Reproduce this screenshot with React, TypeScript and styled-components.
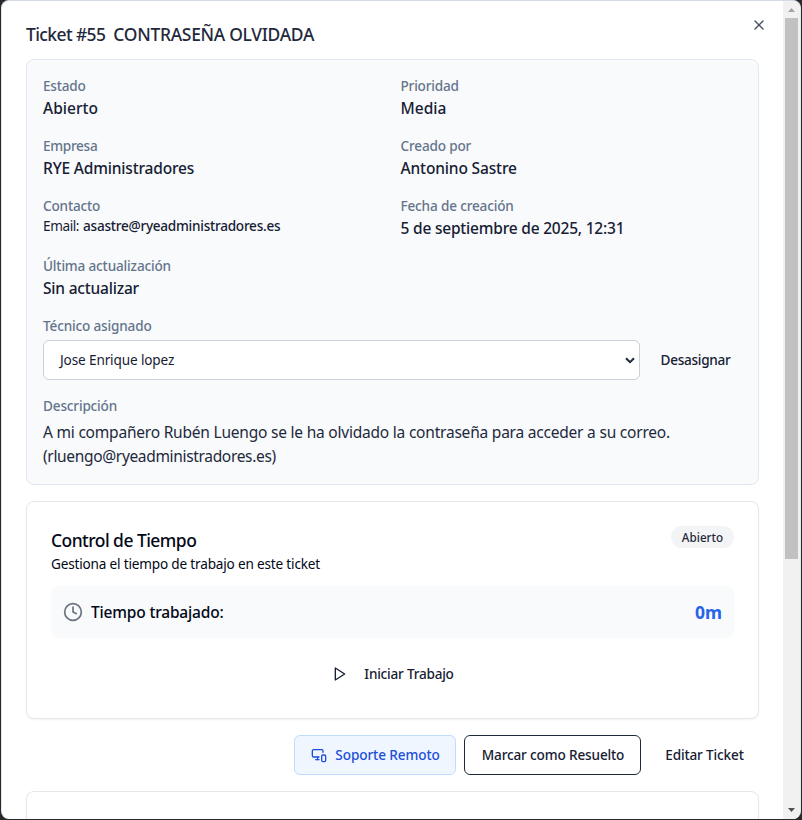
import React from "react";
import styled, { createGlobalStyle } from "styled-components";
import { Clock, MonitorSmartphone, X } from "lucide-react";

const GlobalStyle = createGlobalStyle`
  *, *::before, *::after { box-sizing: border-box; }
  body {
    margin: 0;
    overflow: hidden;
    background: #29292d;
    font-family: "Noto Sans", "Open Sans", sans-serif;
    color: #020817;
  }
  h2, h3, p, dl, dt, dd { margin: 0; font-weight: inherit; }
`;

interface Tracked {
  $track?: number;
}

const Dialog = styled.div`
  position: relative;
  display: flex;
  height: 819px;
  margin: 0 1px 1px;
  border: 1px solid #e2e8f0;
  border-top-color: #d5dbe6;
  border-bottom: 0;
  border-radius: 8px;
  background: #fff;
  overflow: hidden;
`;

const Content = styled.div`
  display: flex;
  flex: 1;
  flex-direction: column;
  gap: 16px;
  min-width: 0;
  padding: 24px 24px 0;
`;

const Title = styled.h2`
  display: flex;
  gap: 8px;
  height: 18px;
  font-size: 17.46px;
  font-weight: 500;
  line-height: 18px;
  color: #1e293b;
  white-space: nowrap;
`;

const TitlePart = styled.span<Tracked>`
  letter-spacing: ${(p) => p.$track ?? 0}px;
`;

const CloseButton = styled.button`
  position: absolute;
  top: 16px;
  right: 33px;
  display: flex;
  padding: 0;
  border: 0;
  background: none;
  color: #4c5564;
`;

const Details = styled.dl`
  display: grid;
  grid-template-columns: 1fr 1fr;
  gap: 16px;
  height: 426px;
  flex-shrink: 0;
  padding: 16px;
  border: 1px solid #e2e8f0;
  border-radius: 8px;
  background: #f8fafc;
`;

const Field = styled.div<{ $wide?: boolean }>`
  grid-column: ${(p) => (p.$wide ? "1 / -1" : "auto")};
  white-space: nowrap;
`;

const Label = styled.dt<Tracked>`
  font-size: 13.58px;
  font-weight: 500;
  line-height: 20px;
  letter-spacing: ${(p) => p.$track ?? -0.17}px;
  color: #64748b;
`;

const Value = styled.dd<Tracked>`
  font-size: 15.52px;
  font-weight: 500;
  line-height: 24px;
  letter-spacing: ${(p) => p.$track ?? 0}px;
  color: #172033;
`;

const Contact = styled.dd`
  display: flex;
  gap: 4px;
  height: 24px;
  font-size: 13.58px;
  line-height: 20px;
  letter-spacing: -0.4px;
  color: #172033;
`;

const Address = styled.span`
  font-weight: 500;
  letter-spacing: -0.26px;
`;

const AssignRow = styled.dd`
  display: flex;
  gap: 8px;
  margin-top: 4px;
`;

const SelectBox = styled.div`
  display: flex;
  flex: 1;
  align-items: center;
  justify-content: space-between;
  height: 40px;
  padding: 0 4px 1px 16px;
  border: 1px solid #cbd0d9;
  border-radius: 6px;
  background: #fff;
  font-size: 13.58px;
  letter-spacing: -0.13px;
  color: #172033;
`;

const Description = styled.dd`
  margin-top: 4px;
  font-size: 15.52px;
  line-height: 24px;
  color: #1e293b;
`;

const DescriptionLine = styled.p<Tracked>`
  letter-spacing: ${(p) => p.$track ?? -0.22}px;
`;

const Button = styled.button<Tracked & { $kind?: "ghost" | "outline" | "remote"; $width: number; $gap?: number }>`
  display: inline-flex;
  flex-shrink: 0;
  align-items: center;
  justify-content: center;
  gap: ${(p) => p.$gap ?? 8}px;
  width: ${(p) => p.$width}px;
  height: 40px;
  padding: 0 0 1px 1px;
  border: 1px solid
    ${(p) => (p.$kind === "outline" ? "#1e293b" : p.$kind === "remote" ? "#bfdbfe" : "transparent")};
  border-radius: 6px;
  background: ${(p) => (p.$kind === "remote" ? "#eff6ff" : "transparent")};
  color: ${(p) => (p.$kind === "remote" ? "#1d4ed8" : "#172033")};
  font-family: inherit;
  font-size: 13.58px;
  font-weight: 500;
  line-height: 19px;
  letter-spacing: ${(p) => p.$track ?? 0}px;
  white-space: nowrap;

  svg { margin-top: 1px; }
`;

const Card = styled.section<{ $height: number }>`
  flex-shrink: 0;
  height: ${(p) => p.$height}px;
  padding: 24px;
  border: 1px solid #e5e7eb;
  border-radius: 8px;
  background: #fff;
  box-shadow: 0 1px 2px rgba(0, 0, 0, 0.05);
`;

const CardHeader = styled.header`
  display: flex;
  align-items: flex-start;
  justify-content: space-between;
`;

const CardTitle = styled.h3`
  font-size: 17.46px;
  font-weight: 500;
  line-height: 28px;
  letter-spacing: -0.52px;
`;

const CardText = styled.p`
  font-size: 13.58px;
  line-height: 20px;
  letter-spacing: -0.18px;
`;

const Badge = styled.span`
  width: 63px;
  height: 22px;
  border-radius: 11px;
  background: #f3f4f6;
  font-size: 11.64px;
  font-weight: 500;
  line-height: 23px;
  letter-spacing: 0.06px;
  text-align: center;
  color: #1f2937;
`;

const TimeBox = styled.div`
  display: flex;
  align-items: center;
  justify-content: space-between;
  height: 52px;
  margin: 12px 0 16px;
  padding: 0 12px;
  border-radius: 8px;
  background: #f9fafb;
`;

const TimeLabel = styled.span`
  display: flex;
  align-items: center;
  gap: 8px;
  font-size: 15.52px;
  font-weight: 500;
  letter-spacing: -0.18px;

  svg { color: #6b7280; }
`;

const TimeTotal = styled.strong`
  font-size: 17.46px;
  font-weight: 700;
  color: #2563eb;
`;

const Centered = styled.div`
  display: flex;
  justify-content: center;
`;

const Actions = styled.div`
  display: flex;
  flex-shrink: 0;
  justify-content: flex-end;
  gap: 8px;
`;

const Scrollbar = styled.div`
  display: flex;
  flex-direction: column;
  align-items: center;
  width: 17px;
  padding-bottom: 1px;
  background: #f1f1f1;
`;

const ScrollArrow = styled.span<{ $down?: boolean }>`
  display: flex;
  align-items: center;
  justify-content: center;
  width: 17px;
  height: 17px;
  margin-top: ${(p) => (p.$down ? "auto" : "0")};
  color: ${(p) => (p.$down ? "#505050" : "#a3a3a3")};
`;

const Thumb = styled.div`
  width: 13px;
  height: 541px;
  background: #c1c1c1;
`;

const PlayIcon = () => (
  <svg width="16" height="16" viewBox="0 0 24 24" fill="none" stroke="currentColor" strokeWidth="2" strokeLinecap="round" strokeLinejoin="round">
    <polygon points="5 3 19 12 5 21 5 3" />
  </svg>
);

export default function App() {
  return (
    <>
      <GlobalStyle />
      <Dialog role="dialog">
        <Content>
          <Title>
            <TitlePart $track={-0.59}>Ticket #55</TitlePart>
            <TitlePart $track={-0.28}>CONTRASEÑA OLVIDADA</TitlePart>
          </Title>

          <Details>
            <Field>
              <Label $track={-0.2}>Estado</Label>
              <Value>Abierto</Value>
            </Field>
            <Field>
              <Label $track={-0.2}>Prioridad</Label>
              <Value>Media</Value>
            </Field>
            <Field>
              <Label $track={-0.3}>Empresa</Label>
              <Value $track={-0.18}>RYE Administradores</Value>
            </Field>
            <Field>
              <Label>Creado por</Label>
              <Value $track={-0.15}>Antonino Sastre</Value>
            </Field>
            <Field>
              <Label>Contacto</Label>
              <Contact>
                Email: <Address>asastre@ryeadministradores.es</Address>
              </Contact>
            </Field>
            <Field>
              <Label>Fecha de creación</Label>
              <Value $track={-0.21}>5 de septiembre de 2025, 12:31</Value>
            </Field>
            <Field $wide>
              <Label>Última actualización</Label>
              <Value $track={-0.2}>Sin actualizar</Value>
            </Field>
            <Field $wide>
              <Label>Técnico asignado</Label>
              <AssignRow>
                <SelectBox>
                  Jose Enrique lopez
                  <svg width="10" height="8" viewBox="0 0 10 8" fill="none" stroke="#1e293b" strokeWidth="2">
                    <path d="M1 2.2 5 6.2 9 2.2" />
                  </svg>
                </SelectBox>
                <Button $width={94} $track={-0.28}>Desasignar</Button>
              </AssignRow>
            </Field>
            <Field $wide>
              <Label>Descripción</Label>
              <Description>
                <DescriptionLine>
                  A mi compañero Rubén Luengo se le ha olvidado la contraseña para acceder a su correo.
                </DescriptionLine>
                <DescriptionLine $track={-0.34}>(rluengo@ryeadministradores.es)</DescriptionLine>
              </Description>
            </Field>
          </Details>

          <Card $height={218}>
            <CardHeader>
              <div>
                <CardTitle>Control de Tiempo</CardTitle>
                <CardText>Gestiona el tiempo de trabajo en este ticket</CardText>
              </div>
              <Badge>Abierto</Badge>
            </CardHeader>
            <TimeBox>
              <TimeLabel>
                <Clock size={20} />
                Tiempo trabajado:
              </TimeLabel>
              <TimeTotal>0m</TimeTotal>
            </TimeBox>
            <Centered>
              <Button $width={154} $gap={16} $track={-0.22}>
                <PlayIcon />
                Iniciar Trabajo
              </Button>
            </Centered>
          </Card>

          <Actions>
            <Button $kind="remote" $width={162} $track={-0.1}>
              <MonitorSmartphone size={16} />
              Soporte Remoto
            </Button>
            <Button $kind="outline" $width={177} $track={-0.15}>Marcar como Resuelto</Button>
            <Button $width={110} $track={-0.15}>Editar Ticket</Button>
          </Actions>

          <Card $height={120} />
        </Content>

        <Scrollbar>
          <ScrollArrow>
            <svg width="7" height="4" viewBox="0 0 7 4" fill="currentColor">
              <path d="M0 4 3.5 0 7 4Z" />
            </svg>
          </ScrollArrow>
          <Thumb />
          <ScrollArrow $down>
            <svg width="7" height="4" viewBox="0 0 7 4" fill="currentColor">
              <path d="M0 0 3.5 4 7 0Z" />
            </svg>
          </ScrollArrow>
        </Scrollbar>

        <CloseButton aria-label="Cerrar">
          <X size={16} strokeWidth={2} />
        </CloseButton>
      </Dialog>
    </>
  );
}
